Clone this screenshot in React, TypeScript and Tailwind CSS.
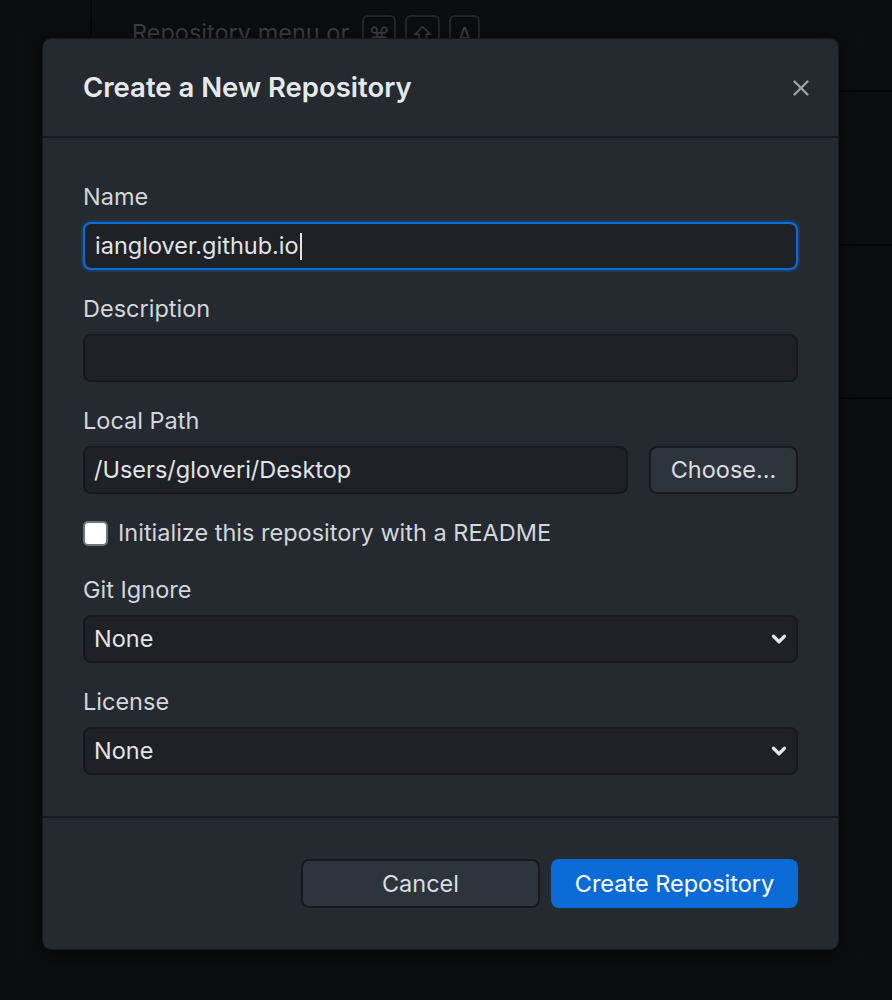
import { X, ChevronDown } from "lucide-react";

function Field({
  label,
  children,
}: {
  label: string;
  children: React.ReactNode;
}) {
  return (
    <div className="flex flex-col gap-[11px]">
      <label className="h-7 text-[23.5px] leading-7 text-[#d3d6da]">{label}</label>
      {children}
    </div>
  );
}

function Select({ value }: { value: string }) {
  return (
    <div className="flex h-12 items-center justify-between rounded-lg border-2 border-[#17191d] bg-[#1e2126] pr-[6px] pl-[9px]">
      <span className="text-[23.5px] text-[#e1e4e8]">{value}</span>
      <ChevronDown size={22} strokeWidth={3.5} className="text-[#e4e6e9]" />
    </div>
  );
}

function Keycap({ children }: { children: React.ReactNode }) {
  return (
    <span className="flex h-[34px] min-w-[31px] items-start justify-center rounded-md border-2 border-[#222529] px-1 pt-[2px] text-[22px] text-[#3a3d42]">
      {children}
    </span>
  );
}

export default function App() {
  return (
    <div
      className="relative flex min-h-[1000px] overflow-hidden bg-[#0c0d0f]"
      style={{ fontFamily: "Inter, 'Noto Sans', sans-serif" }}
    >
      {/* background app */}
      <div className="h-[400px] w-[92px] border-r-2 border-[#050607]" />
      <div className="flex flex-1 flex-col">
        <div className="flex h-[92px] items-start gap-[9px] border-b-2 border-[#050607] pt-[15px] pl-[40px]">
          <span className="mr-1 text-[23.5px] text-[#3a3d42]">Repository menu or</span>
          <Keycap>⌘</Keycap>
          <Keycap>⇧</Keycap>
          <Keycap>A</Keycap>
        </div>
        <div className="h-[154px] border-b-2 border-[#050607]" />
        <div className="h-[153px] border-b-2 border-[#050607]" />
      </div>

      {/* dialog */}
      <div className="absolute top-[38px] left-[42px] flex w-[797px] flex-col rounded-[9px] border border-[#16181b] bg-[#252a31] shadow-[0_4px_20px_rgba(0,0,0,0.5)]">
        <div className="flex h-[99px] items-center justify-between border-b-2 border-[#17191d] pr-[24px] pl-[40px]">
          <h1 className="text-[27.5px] font-semibold text-[#e6e8eb]">Create a New Repository</h1>
          <X size={26} strokeWidth={2.2} className="text-[#9aa1a9]" />
        </div>

        <div className="flex flex-col gap-[25px] px-[40px] pt-[45px] pb-[41px]">
          <Field label="Name">
            <div className="flex h-12 items-center rounded-lg border-2 border-[#0a6cdb] bg-[#1e2126] pl-[10px] shadow-[0_0_0_2px_rgba(10,108,219,0.25)]">
              <span className="text-[23.5px] text-[#e1e4e8]">ianglover.github.io</span>
              <span className="ml-[1px] h-[27px] w-[2px] bg-[#e1e4e8]" />
            </div>
          </Field>

          <Field label="Description">
            <div className="h-12 rounded-lg border-2 border-[#17191d] bg-[#1e2126]" />
          </Field>

          <Field label="Local Path">
            <div className="flex gap-[21px]">
              <div className="flex h-12 flex-1 items-center rounded-lg border-2 border-[#17191d] bg-[#1e2126] pl-[9px]">
                <span className="text-[23.5px] text-[#e1e4e8]">/Users/gloveri/Desktop</span>
              </div>
              <button className="h-12 w-[149px] rounded-lg border-2 border-[#17191d] bg-[#2e343b] text-[23.5px] text-[#d9dce0]">
                Choose...
              </button>
            </div>
          </Field>

          <label className="flex h-7 items-center gap-[10px]">
            <span className="h-[25px] w-[25px] rounded-[5px] border-2 border-[#6e747c] bg-white" />
            <span className="text-[23.5px] text-[#d3d6da]">Initialize this repository with a README</span>
          </label>

          <div className="mt-[4px]">
            <Field label="Git Ignore">
              <Select value="None" />
            </Field>
          </div>

          <Field label="License">
            <Select value="None" />
          </Field>
        </div>

        <div className="flex justify-end gap-[11px] border-t-2 border-[#17191d] px-[40px] pt-[41px] pb-[41px]">
          <button className="h-[49px] w-[239px] rounded-lg border-2 border-[#17191d] bg-[#2e343b] text-[23.5px] text-[#d9dce0]">
            Cancel
          </button>
          <button className="h-[49px] w-[247px] rounded-lg bg-[#0a6bd6] text-[23.5px] text-white">
            Create Repository
          </button>
        </div>
      </div>
    </div>
  );
}
